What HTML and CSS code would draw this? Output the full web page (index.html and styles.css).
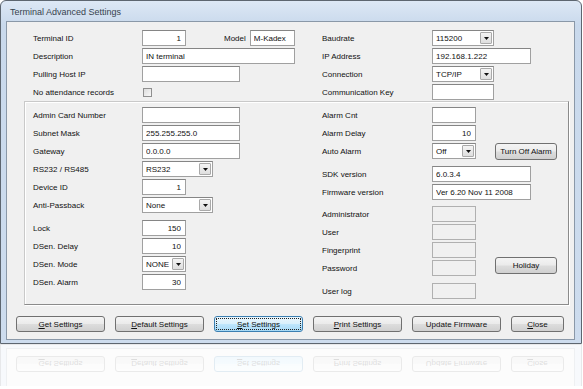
FILE: index.html
```html
<!DOCTYPE html>
<html lang="en">
<head>
    <meta charset="UTF-8">
    <meta name="viewport" content="width=device-width, initial-scale=1.0">
    <title>Terminal Advanced Settings</title>
    <link rel="stylesheet" href="styles.css">
</head>
<body>
    <div class="window">
        <div class="title-bar">Terminal Advanced Settings</div>

        <div class="client">
            <!-- General terminal settings -->
            <div class="top-section">
                <div class="column left-col">
                    <div class="row">
                        <span class="label">Terminal ID</span>
                        <input class="field num w44" type="text" value="1">
                        <span class="model-label">Model</span>
                        <input class="field w45" type="text" value="M-Kadex">
                    </div>
                    <div class="row">
                        <span class="label">Description</span>
                        <input class="field w153" type="text" value="IN terminal">
                    </div>
                    <div class="row">
                        <span class="label">Pulling Host IP</span>
                        <input class="field w98" type="text" value="">
                    </div>
                    <div class="row">
                        <span class="label">No attendance records</span>
                        <span class="check"></span>
                    </div>
                </div>

                <div class="column right-col">
                    <div class="row">
                        <span class="label wide">Baudrate</span>
                        <div class="combo w62">
                            <span class="combo-text">115200</span>
                            <span class="drop-btn"><svg width="5" height="3" viewBox="0 0 5 3"><path d="M0 0h5L2.5 3z" fill="#111"/></svg></span>
                        </div>
                    </div>
                    <div class="row">
                        <span class="label wide">IP Address</span>
                        <input class="field w99" type="text" value="192.168.1.222">
                    </div>
                    <div class="row">
                        <span class="label wide">Connection</span>
                        <div class="combo w62">
                            <span class="combo-text">TCP/IP</span>
                            <span class="drop-btn"><svg width="5" height="3" viewBox="0 0 5 3"><path d="M0 0h5L2.5 3z" fill="#111"/></svg></span>
                        </div>
                    </div>
                    <div class="row">
                        <span class="label wide">Communication Key</span>
                        <input class="field w62" type="text" value="">
                    </div>
                </div>
            </div>

            <!-- Device settings group -->
            <div class="group-box">
                <div class="column left-col">
                    <div class="row">
                        <span class="label">Admin Card Number</span>
                        <input class="field w98" type="text" value="">
                    </div>
                    <div class="row">
                        <span class="label">Subnet Mask</span>
                        <input class="field w98" type="text" value="255.255.255.0">
                    </div>
                    <div class="row">
                        <span class="label">Gateway</span>
                        <input class="field w98" type="text" value="0.0.0.0">
                    </div>
                    <div class="row">
                        <span class="label">RS232 / RS485</span>
                        <div class="combo w71">
                            <span class="combo-text">RS232</span>
                            <span class="drop-btn"><svg width="5" height="3" viewBox="0 0 5 3"><path d="M0 0h5L2.5 3z" fill="#111"/></svg></span>
                        </div>
                    </div>
                    <div class="row">
                        <span class="label">Device ID</span>
                        <input class="field num w44" type="text" value="1">
                    </div>
                    <div class="row">
                        <span class="label">Anti-Passback</span>
                        <div class="combo w71">
                            <span class="combo-text">None</span>
                            <span class="drop-btn"><svg width="5" height="3" viewBox="0 0 5 3"><path d="M0 0h5L2.5 3z" fill="#111"/></svg></span>
                        </div>
                    </div>
                    <div class="row spaced">
                        <span class="label">Lock</span>
                        <input class="field num w44" type="text" value="150">
                    </div>
                    <div class="row">
                        <span class="label">DSen. Delay</span>
                        <input class="field num w44" type="text" value="10">
                    </div>
                    <div class="row">
                        <span class="label">DSen. Mode</span>
                        <div class="combo w44">
                            <span class="combo-text">NONE</span>
                            <span class="drop-btn"><svg width="5" height="3" viewBox="0 0 5 3"><path d="M0 0h5L2.5 3z" fill="#111"/></svg></span>
                        </div>
                    </div>
                    <div class="row">
                        <span class="label">DSen. Alarm</span>
                        <input class="field num w44" type="text" value="30">
                    </div>
                </div>

                <div class="column right-col">
                    <div class="row">
                        <span class="label wide">Alarm Cnt</span>
                        <input class="field w44" type="text" value="">
                    </div>
                    <div class="row">
                        <span class="label wide">Alarm Delay</span>
                        <input class="field num w44" type="text" value="10">
                    </div>
                    <div class="row">
                        <span class="label wide">Auto Alarm</span>
                        <div class="combo w44">
                            <span class="combo-text">Off</span>
                            <span class="drop-btn"><svg width="5" height="3" viewBox="0 0 5 3"><path d="M0 0h5L2.5 3z" fill="#111"/></svg></span>
                        </div>
                        <button class="btn side-btn">Turn Off Alarm</button>
                    </div>
                    <div class="row spaced">
                        <span class="label wide">SDK version</span>
                        <input class="field w99" type="text" value="6.0.3.4">
                    </div>
                    <div class="row">
                        <span class="label wide">Firmware version</span>
                        <input class="field w99" type="text" value="Ver 6.20 Nov 11 2008">
                    </div>
                    <div class="row spaced-sm">
                        <span class="label wide">Administrator</span>
                        <span class="field disabled w44"></span>
                    </div>
                    <div class="row">
                        <span class="label wide">User</span>
                        <span class="field disabled w44"></span>
                    </div>
                    <div class="row">
                        <span class="label wide">Fingerprint</span>
                        <span class="field disabled w44"></span>
                    </div>
                    <div class="row">
                        <span class="label wide">Password</span>
                        <span class="field disabled w44"></span>
                        <button class="btn side-btn raised">Holiday</button>
                    </div>
                    <div class="row spaced">
                        <span class="label wide">User log</span>
                        <span class="field disabled w44"></span>
                    </div>
                </div>
            </div>

            <!-- Dialog buttons -->
            <div class="button-row">
                <button class="btn"><u>G</u>et Settings</button>
                <button class="btn"><u>D</u>efault Settings</button>
                <button class="btn focused"><u>S</u>et Settings</button>
                <button class="btn"><u>P</u>rint Settings</button>
                <button class="btn">Update Firmware</button>
                <button class="btn close-btn"><u>C</u>lose</button>
            </div>
        </div>
    </div>

    <!-- Mirror of the window's lower edge -->
    <div class="reflection" aria-hidden="true">
        <div class="reflection-client">
            <div class="button-row">
                <span class="btn"><u>G</u>et Settings</span>
                <span class="btn"><u>D</u>efault Settings</span>
                <span class="btn focused"><u>S</u>et Settings</span>
                <span class="btn"><u>P</u>rint Settings</span>
                <span class="btn">Update Firmware</span>
                <span class="btn close-btn"><u>C</u>lose</span>
            </div>
        </div>
    </div>
</body>
</html>
```

FILE: styles.css
```css
body {
    margin: 0;
    background-color: #fff;
    font-family: "Liberation Sans", Arial, sans-serif;
    font-size: 8px;
    color: #111;
    overflow: hidden;
}

.window {
    width: 582px;
    box-sizing: border-box;
    border: 1px solid #5d6670;
    border-radius: 6px 6px 0 0;
    background: linear-gradient(#dde8f5, #c9d9ec 24px, #cddcee); /* Aero frame */
    padding: 0 6px 3px 5px;
}

.title-bar {
    height: 20px;
    line-height: 23px;
    padding-left: 4px;
    font-size: 9px;
    color: #38424d;
}

.client {
    background-color: #f0f0f0;
    border: 1px solid #8a98a8;
    padding: 8px 0 7px 0;
}

.top-section {
    display: flex;
    padding-left: 26px;
}

.column {
    display: flex;
    flex-direction: column;
    gap: 2px;
}

.left-col {
    width: 289px;
}

.right-col {
    flex: 1;
}

.row {
    display: flex;
    align-items: center;
    height: 16px;
}

.row.spaced {
    margin-top: 5px;
}

.row.spaced-sm {
    margin-top: 4px;
}

.label {
    width: 109px;
    flex-shrink: 0;
    white-space: nowrap;
}

.label.wide {
    width: 110px;
}

.model-label {
    margin-left: 38px;
    margin-right: 4px;
}

.field {
    display: block;
    height: 16px;
    box-sizing: border-box;
    margin: 0;
    padding: 0 3px;
    border: 1px solid #a0a0a0;
    border-top-color: #858585;
    background-color: #fff;
    font-family: inherit;
    font-size: 8px;
    color: #111;
    outline: none;
}

.field.num {
    text-align: right;
    padding-right: 4px;
}

.field.disabled {
    background-color: #f0f0f0;
    border-color: #b0b0b0;
}

.w44 { width: 44px; }
.w45 { width: 45px; }
.w62 { width: 62px; }
.w71 { width: 71px; }
.w98 { width: 98px; }
.w99 { width: 99px; }
.w153 { width: 153px; }

.check {
    width: 9px;
    height: 9px;
    box-sizing: border-box;
    margin-left: 1px;
    border: 1px solid #8f8f8f;
    background: linear-gradient(135deg, #dcdcdc, #f8f8f8);
}

.combo {
    display: flex;
    align-items: center;
    height: 16px;
    box-sizing: border-box;
    padding-left: 3px;
    border: 1px solid #a0a0a0;
    border-top-color: #858585;
    background-color: #fff;
}

.combo-text {
    flex: 1;
}

.drop-btn {
    display: flex;
    align-items: center;
    justify-content: center;
    width: 12px;
    height: 12px;
    box-sizing: border-box;
    margin-right: 1px;
    border: 1px solid #a9a9a9;
    border-radius: 1px;
    background: linear-gradient(#f4f4f4, #dedede);
}

.group-box {
    display: flex;
    margin: 1px 5px 0 17px;
    padding: 5px 0 5px 8px;
    border: 1px solid;
    border-color: #c9c9c9 #8b8b8b #8b8b8b #c9c9c9;
    box-shadow: 1px 1px 0 #fff, inset 1px 1px 0 #fff;
}

.btn {
    height: 16px;
    box-sizing: border-box;
    padding: 0;
    border: 1px solid #707070;
    border-radius: 3px;
    background: linear-gradient(#f4f4f4 0%, #ebebeb 48%, #dddddd 52%, #d0d0d0 100%);
    font-family: inherit;
    font-size: 8px;
    color: #111;
    cursor: pointer;
}

.side-btn {
    width: 62px;
    height: 17px;
    margin-left: 19px;
}

.side-btn.raised {
    margin-top: -6px;
}

.button-row {
    display: flex;
    gap: 10px;
    margin-top: 11px;
    padding-left: 9px;
}

.button-row .btn {
    width: 89px;
}

.button-row .close-btn {
    width: 53px;
}

.btn.focused {
    border-color: #3c7fb1;
    background: linear-gradient(#eaf6fd 0%, #d9f0fc 48%, #bee6fd 52%, #a7d9f5 100%);
    outline: 1px dotted #222;
    outline-offset: -3px;
}

/* faded, upside-down copy of the dialog's bottom edge */
.reflection {
    width: 582px;
    box-sizing: border-box;
    padding: 0 6px 3px 5px;
    border: 1px solid #5d6670;
    border-top: none;
    background-color: #cddcee;
    transform: scaleY(-1);
    opacity: 0.14;
}

.reflection-client {
    background-color: #f0f0f0;
    border: 1px solid #8a98a8;
    border-top: none;
    padding: 14px 0 7px 0;
}

.reflection .button-row {
    margin-top: 0;
}

.reflection .btn {
    display: flex;
    align-items: center;
    justify-content: center;
    outline: none;
}
```
